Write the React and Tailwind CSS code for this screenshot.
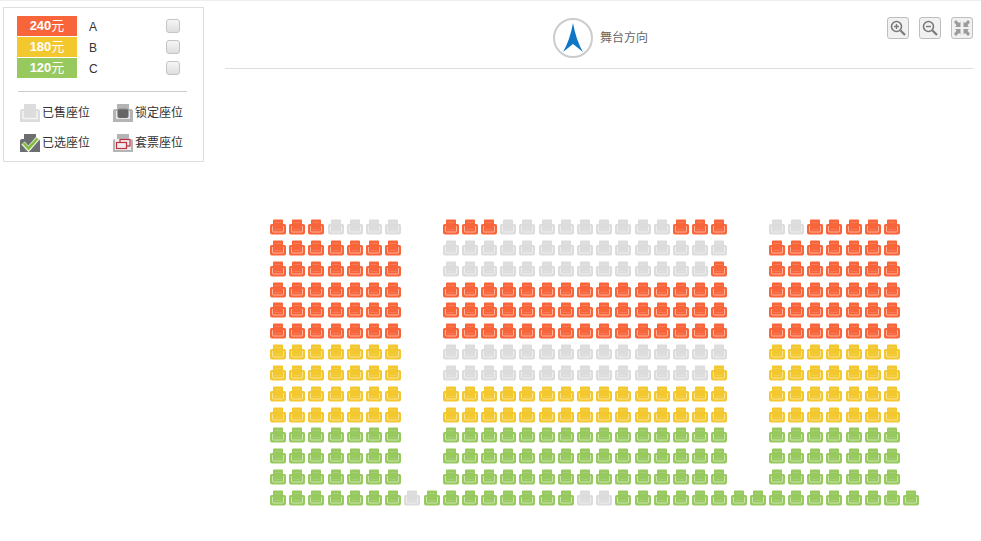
const RED = "#f9653a";
const YEL = "#f3c72e";
const GRN = "#97c95f";
const GRY = "#dcdcdc";

const colorOf = { r: RED, y: YEL, g: GRN, x: GRY };

// rows: left block (7), middle block (15), right block (7)
const rep = (c, n) => c.repeat(n);
const rows = [
  ["rrrxxxx", "rrr" + rep("x", 9) + "rrr", "xxrrrrr"],
  ["rrrrrrr", rep("x", 15), "rrrrrrr"],
  ["rrrrrrr", rep("x", 14) + "r", "rrrrrrr"],
  ["rrrrrrr", rep("r", 15), "rrrrrrr"],
  ["rrrrrrr", rep("r", 15), "rrrrrrr"],
  ["rrrrrrr", rep("r", 15), "rrrrrrr"],
  ["yyyyyyy", rep("x", 15), "yyyyyyy"],
  ["yyyyyyy", rep("x", 14) + "y", "yyyyyyy"],
  ["yyyyyyy", rep("y", 15), "yyyyyyy"],
  ["yyyyyyy", rep("y", 15), "yyyyyyy"],
  ["ggggggg", rep("g", 15), "ggggggg"],
  ["ggggggg", rep("g", 15), "ggggggg"],
  ["ggggggg", rep("g", 15), "ggggggg"],
];

// last row runs straight across the aisles
const lastRow = rep("g", 7) + "xg" + rep("g", 7) + "xx" + rep("g", 16);

const seatRows = [
  ...rows.map((r) => r[0] + "  " + r[1] + "  " + r[2] + " "),
  lastRow,
];

const Chair = ({ color }) => (
  <svg width="16" height="16" viewBox="0 0 16 16" className="block">
    <path
      d="M4 0.500h8a1 1 0 0 1 1 1V5h1.500A1.500 1.500 0 0 1 16 6.500V13.500a2 2 0 0 1-2 2H2a2 2 0 0 1-2-2V6.500A1.500 1.500 0 0 1 1.500 5H3V1.500a1 1 0 0 1 1-1z"
      fill={color}
    />
    <path
      d="M2.500 7V12a1 1 0 0 0 1 1h9a1 1 0 0 0 1-1V7"
      fill="none"
      stroke="#fff"
      strokeOpacity="0.5"
      strokeWidth="1"
    />
    <path d="M4.500 3.500h7M4.500 10.500h7" stroke="#fff" strokeOpacity="0.14" strokeWidth="1" />
  </svg>
);

const LegendIcon = ({ type }) => {
  if (type === "sold")
    return (
      <svg width="20" height="18" viewBox="0 0 20 18">
        <path d="M4 0h12v5h2a2 2 0 0 1 2 2v11H0V7a2 2 0 0 1 2-2h2z" fill="#dcdcdc" />
        <path d="M3 7v7.500h14V7" fill="none" stroke="#f4f4f4" strokeWidth="1.500" />
      </svg>
    );
  if (type === "locked")
    return (
      <svg width="20" height="18" viewBox="0 0 20 18">
        <path d="M4 0h12v5h2a2 2 0 0 1 2 2v11H0V7a2 2 0 0 1 2-2h2z" fill="#b4b4b4" />
        <path d="M3 7v8h14V7" fill="#e4e4e4" />
        <rect x="4.500" y="5" width="11" height="9" rx="2" fill="#666" />
        <path d="M6 5h8" stroke="#8a8a8a" strokeWidth="1" />
      </svg>
    );
  if (type === "chosen")
    return (
      <svg width="20" height="18" viewBox="0 0 20 18">
        <path d="M4 0h12v5h2a2 2 0 0 1 2 2v11H0V7a2 2 0 0 1 2-2h2z" fill="#6c6e72" />
        <path d="M3 9l5.500 6L18 4" fill="none" stroke="#e6efd6" strokeWidth="4.500" />
        <path d="M3.500 9l5 5.300L17.500 4.500" fill="none" stroke="#7fbb3c" strokeWidth="2.500" />
      </svg>
    );
  return (
    <svg width="20" height="18" viewBox="0 0 20 18">
      <path d="M4 0h12v5h2a2 2 0 0 1 2 2v11H0V7a2 2 0 0 1 2-2h2z" fill="#b4b4b4" />
      <rect x="2" y="5" width="16" height="11" fill="#eee" />
      <rect x="7" y="5.500" width="10" height="6.500" fill="none" stroke="#c0303f" strokeWidth="1.200" />
      <rect x="3.500" y="8.500" width="10" height="6" fill="#eee" stroke="#c0303f" strokeWidth="1.200" />
    </svg>
  );
};

const prices = [
  { label: "240", name: "A", bg: "bg-[#f9653a]" },
  { label: "180", name: "B", bg: "bg-[#f3c72e]" },
  { label: "120", name: "C", bg: "bg-[#97c95f]" },
];

const legend = [
  { type: "sold", text: "已售座位" },
  { type: "locked", text: "锁定座位" },
  { type: "chosen", text: "已选座位" },
  { type: "package", text: "套票座位" },
];

const ToolBtn = ({ children }) => (
  <button className="w-[22px] h-[22px] flex items-center justify-center rounded-[3px] border border-[#bdbdbd] bg-[#f1f1f1]">
    {children}
  </button>
);

const Magnifier = ({ plus }) => (
  <svg width="18" height="18" viewBox="0 0 18 18" fill="none" stroke="#77797a">
    <circle cx="7.500" cy="7.500" r="5" strokeWidth="1.600" />
    <path d="M11.500 11.500L16 16" strokeWidth="2.200" />
    <path d="M5 7.500h5" strokeWidth="1.400" />
    {plus && <path d="M7.500 5v5" strokeWidth="1.400" />}
  </svg>
);

const Collapse = () => (
  <svg width="18" height="18" viewBox="0 0 18 18" fill="#9a9c9c">
    <path d="M1 3l2-2 3 3 1.500-1.500V8H2l1.500-1.500z" />
    <path d="M17 3l-2-2-3 3-1.500-1.500V8H16l-1.500-1.500z" />
    <path d="M1 15l2 2 3-3 1.500 1.500V10H2l1.500 1.500z" />
    <path d="M17 15l-2 2-3-3-1.500 1.500V10H16l-1.500 1.500z" />
  </svg>
);

export default function App() {
  return (
    <div
      className="flex h-[541px] w-[981px] overflow-hidden bg-white border-t border-[#eeeeee] text-[12px] text-[#333]"
      style={{ fontFamily: '"Liberation Sans", "Noto Sans CJK SC", sans-serif' }}
    >
      {/* Price panel */}
      <aside className="ml-[3px] mt-[6px] w-[201px] h-[155px] shrink-0 border border-[#dddddd] pt-[8px]">
        <div className="flex flex-col gap-px pl-[13px] pr-[23px]">
          {prices.map((p) => (
            <div key={p.name} className="flex items-center h-[20px]">
              <span className={`w-[60px] h-[20px] pb-[2px] flex items-center justify-center text-white text-[13px] leading-none ${p.bg}`}>
                <b>{p.label}</b>元
              </span>
              <span className="ml-[12px] mt-[1px] text-[12px]">{p.name}</span>
              <span className="ml-auto w-[14px] h-[14px] rounded-[3px] border border-[#c4c4c4] bg-gradient-to-b from-[#f6f6f6] to-[#dedede]" />
            </div>
          ))}
        </div>
        <div className="mt-[13px] ml-[14px] mr-[16px] border-t border-[#cccccc]" />
        <div className="grid grid-cols-[93px_1fr] gap-y-[12px] mt-[12px] pl-[16px]">
          {legend.map((l) => (
            <div key={l.type} className="flex items-center h-[18px] gap-[2px]">
              <LegendIcon type={l.type} />
              <span className="whitespace-nowrap text-[12px]">{l.text}</span>
            </div>
          ))}
        </div>
      </aside>

      <main className="ml-[21px] w-[748px] shrink-0">
        {/* Stage header */}
        <div className="relative flex items-center justify-center h-[68px] border-b border-[#dddddd] pt-[7px] pr-[1px]">
          <div className="flex items-center gap-[7px] pl-[4px]">
            <svg width="40" height="40" viewBox="0 0 40 40">
              <circle cx="20" cy="20" r="19" fill="#fff" stroke="#cccccc" strokeWidth="2" />
              <path d="M20 5Q23 22 30 34L20 26L10 34Q17 22 20 5z" fill="#0f76c6" />
            </svg>
            <span className="text-[#666] text-[12px]">舞台方向</span>
          </div>
          <div className="absolute right-0 top-[16px] flex gap-[10px]">
            <ToolBtn><Magnifier plus /></ToolBtn>
            <ToolBtn><Magnifier /></ToolBtn>
            <ToolBtn><Collapse /></ToolBtn>
          </div>
        </div>

        {/* Seats */}
        <div className="ml-[45px] mt-[150px] grid grid-cols-[repeat(34,19.2px)] auto-rows-[20.85px]">
          {seatRows.map((row, r) =>
            row.split("").map((c, i) => (
              <div key={r + "-" + i}>
                {c !== " " && <Chair color={colorOf[c]} />}
              </div>
            ))
          )}
        </div>
      </main>
    </div>
  );
}
